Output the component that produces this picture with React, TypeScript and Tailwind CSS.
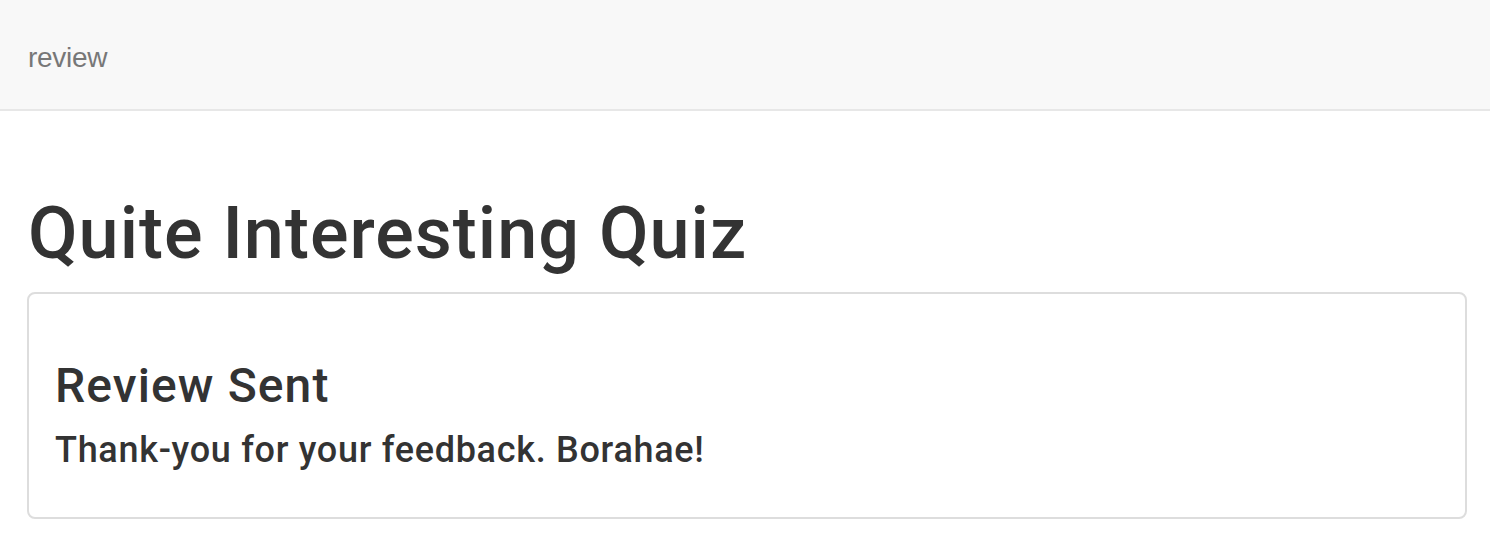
export default function App() {
  return (
    <div className="min-h-[544px] bg-white text-[#333]" style={{ fontFamily: '"Liberation Sans", Arial, sans-serif' }}>
      <nav className="h-[111px] bg-[#f8f8f8] border-b-2 border-[#e7e7e7] flex items-center px-[28px]">
        <span className="text-[28px] text-[#777] leading-none pt-[6px] tracking-[-0.3px]">review</span>
      </nav>
      <div className="pl-[27px] pr-[23px]">
        <h1 className="mt-[83px] mb-[19px] text-[72px] font-medium leading-[1.1] pl-[1px] tracking-[1px] font-['Roboto',sans-serif]">Quite Interesting Quiz</h1>
        <div className="border-2 border-[#ddd] rounded-[8px] pt-[66px] pb-[46px] px-[26px] font-['Roboto',sans-serif]">
          <h3 className="text-[48px] font-medium leading-[1.1] mb-[18px] tracking-[1.1px]">Review Sent</h3>
          <h4 className="text-[36px] font-medium leading-[1.1] tracking-[0.7px]">Thank-you for your feedback. Borahae!</h4>
        </div>
      </div>
    </div>
  );
}
